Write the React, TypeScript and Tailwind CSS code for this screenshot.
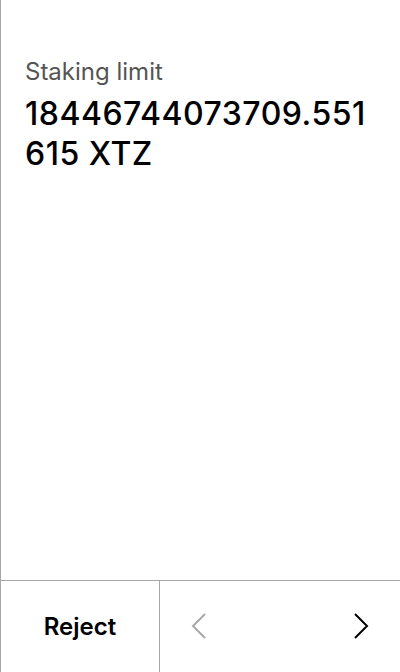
export default function App() {
  return (
    <div
      className="flex h-[672px] w-[400px] flex-col border-l border-[#a8a8a8] bg-white text-black"
      style={{ fontFamily: 'Inter, "Noto Sans", sans-serif' }}
    >
      <div className="flex-1 px-6 pt-[56px]">
        <div className="text-[24px] leading-[32px] text-[#555555]">Staking limit</div>
        <div className="mt-[6px] break-all text-[32px] font-medium leading-[40px] tracking-[0.5px]">
          18446744073709.551615 XTZ
        </div>
      </div>
      <div className="flex h-[92px] border-t border-[#a8a8a8]">
        <button className="flex w-[159px] items-center justify-center border-r border-[#a8a8a8] text-[24px] font-semibold">
          Reject
        </button>
        <div className="flex flex-1 items-center justify-between px-[31px]">
          <svg width="16" height="28" viewBox="0 0 16 28" fill="none">
            <polyline points="14,1 2,13 14,25" stroke="#a8a8a8" strokeWidth="2" />
          </svg>
          <svg width="16" height="28" viewBox="0 0 16 28" fill="none">
            <polyline points="2,1 14,13 2,25" stroke="#000" strokeWidth="2" />
          </svg>
        </div>
      </div>
    </div>
  );
}
